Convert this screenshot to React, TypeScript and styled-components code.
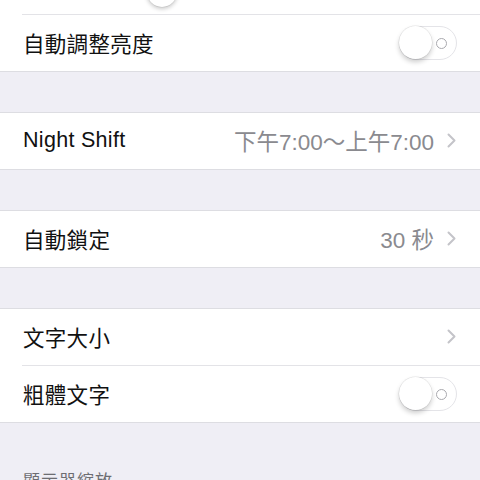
import React from "react";
import styled, { createGlobalStyle } from "styled-components";

const Global = createGlobalStyle`
  html, body { margin: 0; padding: 0; background: #efeef5; overflow: hidden; }
  body { font-family: "Liberation Sans", "Noto Sans CJK TC", sans-serif; }
`;

const Page = styled.div`
  width: 480px;
  height: 480px;
  overflow: hidden;
  background: #efeef5;
`;

const Scroller = styled.div`
  display: flex;
  flex-direction: column;
  margin-top: -43px;
`;

const Group = styled.div<{ $gap?: number }>`
  background: #fff;
  border-top: 1px solid #dddde2;
  border-bottom: 1px solid #dddde2;
  margin-top: ${(p) => p.$gap ?? 0}px;
  display: flex;
  flex-direction: column;
`;

const Row = styled.div`
  height: 56px;
  display: flex;
  align-items: center;
  padding: 0 22px 2px 23px;
  box-sizing: border-box;
`;

const Separator = styled.div`
  height: 1px;
  margin-left: 22px;
  background: #e3e3e7;
`;

const Label = styled.span`
  flex: 1;
  font-size: 21.5px;
  color: #111;
  letter-spacing: 0.3px;
`;

const Value = styled.span`
  font-size: 22.5px;
  color: #8a8a8f;
  margin-right: 13px;
`;

const Chevron = styled.svg`
  width: 9px;
  height: 15px;
  margin-right: 2px;
`;

const SliderTrack = styled.div`
  position: relative;
  flex: 1;
  height: 3px;
  background: #e0e0e4;
  border-radius: 2px;
  margin-top: 14px;
`;

const SliderKnob = styled.div`
  position: absolute;
  left: 124px;
  top: -14px;
  width: 30px;
  height: 30px;
  border-radius: 50%;
  background: #fff;
  box-shadow: 0 2px 4px rgba(0, 0, 0, 0.22), 0 0 0 0.5px rgba(0, 0, 0, 0.08);
`;

const Toggle = styled.div`
  position: relative;
  width: 58px;
  height: 34px;
  border-radius: 17px;
  border: 1.5px solid #e4e4e8;
  box-sizing: border-box;
  background: #fff;
  margin: 2px 1px 0 0;
`;

const Knob = styled.div`
  position: absolute;
  left: -1px;
  top: -1px;
  width: 33px;
  height: 33px;
  border-radius: 50%;
  background: #fff;
  box-shadow: 0 3px 5px rgba(0, 0, 0, 0.2), 0 0 0 0.5px rgba(0, 0, 0, 0.1);
`;

const OffMark = styled.div`
  position: absolute;
  right: 9px;
  top: 50%;
  width: 9px;
  height: 9px;
  margin-top: -5.5px;
  border-radius: 50%;
  border: 1.3px solid #a9a9ae;
`;

const Header = styled.div`
  padding: 44px 23px 0;
  font-size: 17px;
  color: #6d6d72;
  letter-spacing: 1px;
`;

const Arrow = () => (
  <Chevron viewBox="0 0 9 15">
    <path d="M1.5 1.5 L7.5 7.5 L1.5 13.5" fill="none" stroke="#c4c4c9" strokeWidth="2" strokeLinecap="round" strokeLinejoin="round" />
  </Chevron>
);

const Switch = () => (
  <Toggle>
    <OffMark />
    <Knob />
  </Toggle>
);

export default function App() {
  return (
    <Page>
      <Global />
      <Scroller>
        <Group>
          <Row>
            <SliderTrack>
              <SliderKnob />
            </SliderTrack>
          </Row>
          <Separator />
          <Row>
            <Label>自動調整亮度</Label>
            <Switch />
          </Row>
        </Group>
        <Group $gap={40}>
          <Row>
            <Label>Night Shift</Label>
            <Value>下午7:00～上午7:00</Value>
            <Arrow />
          </Row>
        </Group>
        <Group $gap={40}>
          <Row>
            <Label>自動鎖定</Label>
            <Value>30 秒</Value>
            <Arrow />
          </Row>
        </Group>
        <Group $gap={40}>
          <Row>
            <Label>文字大小</Label>
            <Arrow />
          </Row>
          <Separator />
          <Row>
            <Label>粗體文字</Label>
            <Switch />
          </Row>
        </Group>
        <Header>顯示器縮放</Header>
      </Scroller>
    </Page>
  );
}
